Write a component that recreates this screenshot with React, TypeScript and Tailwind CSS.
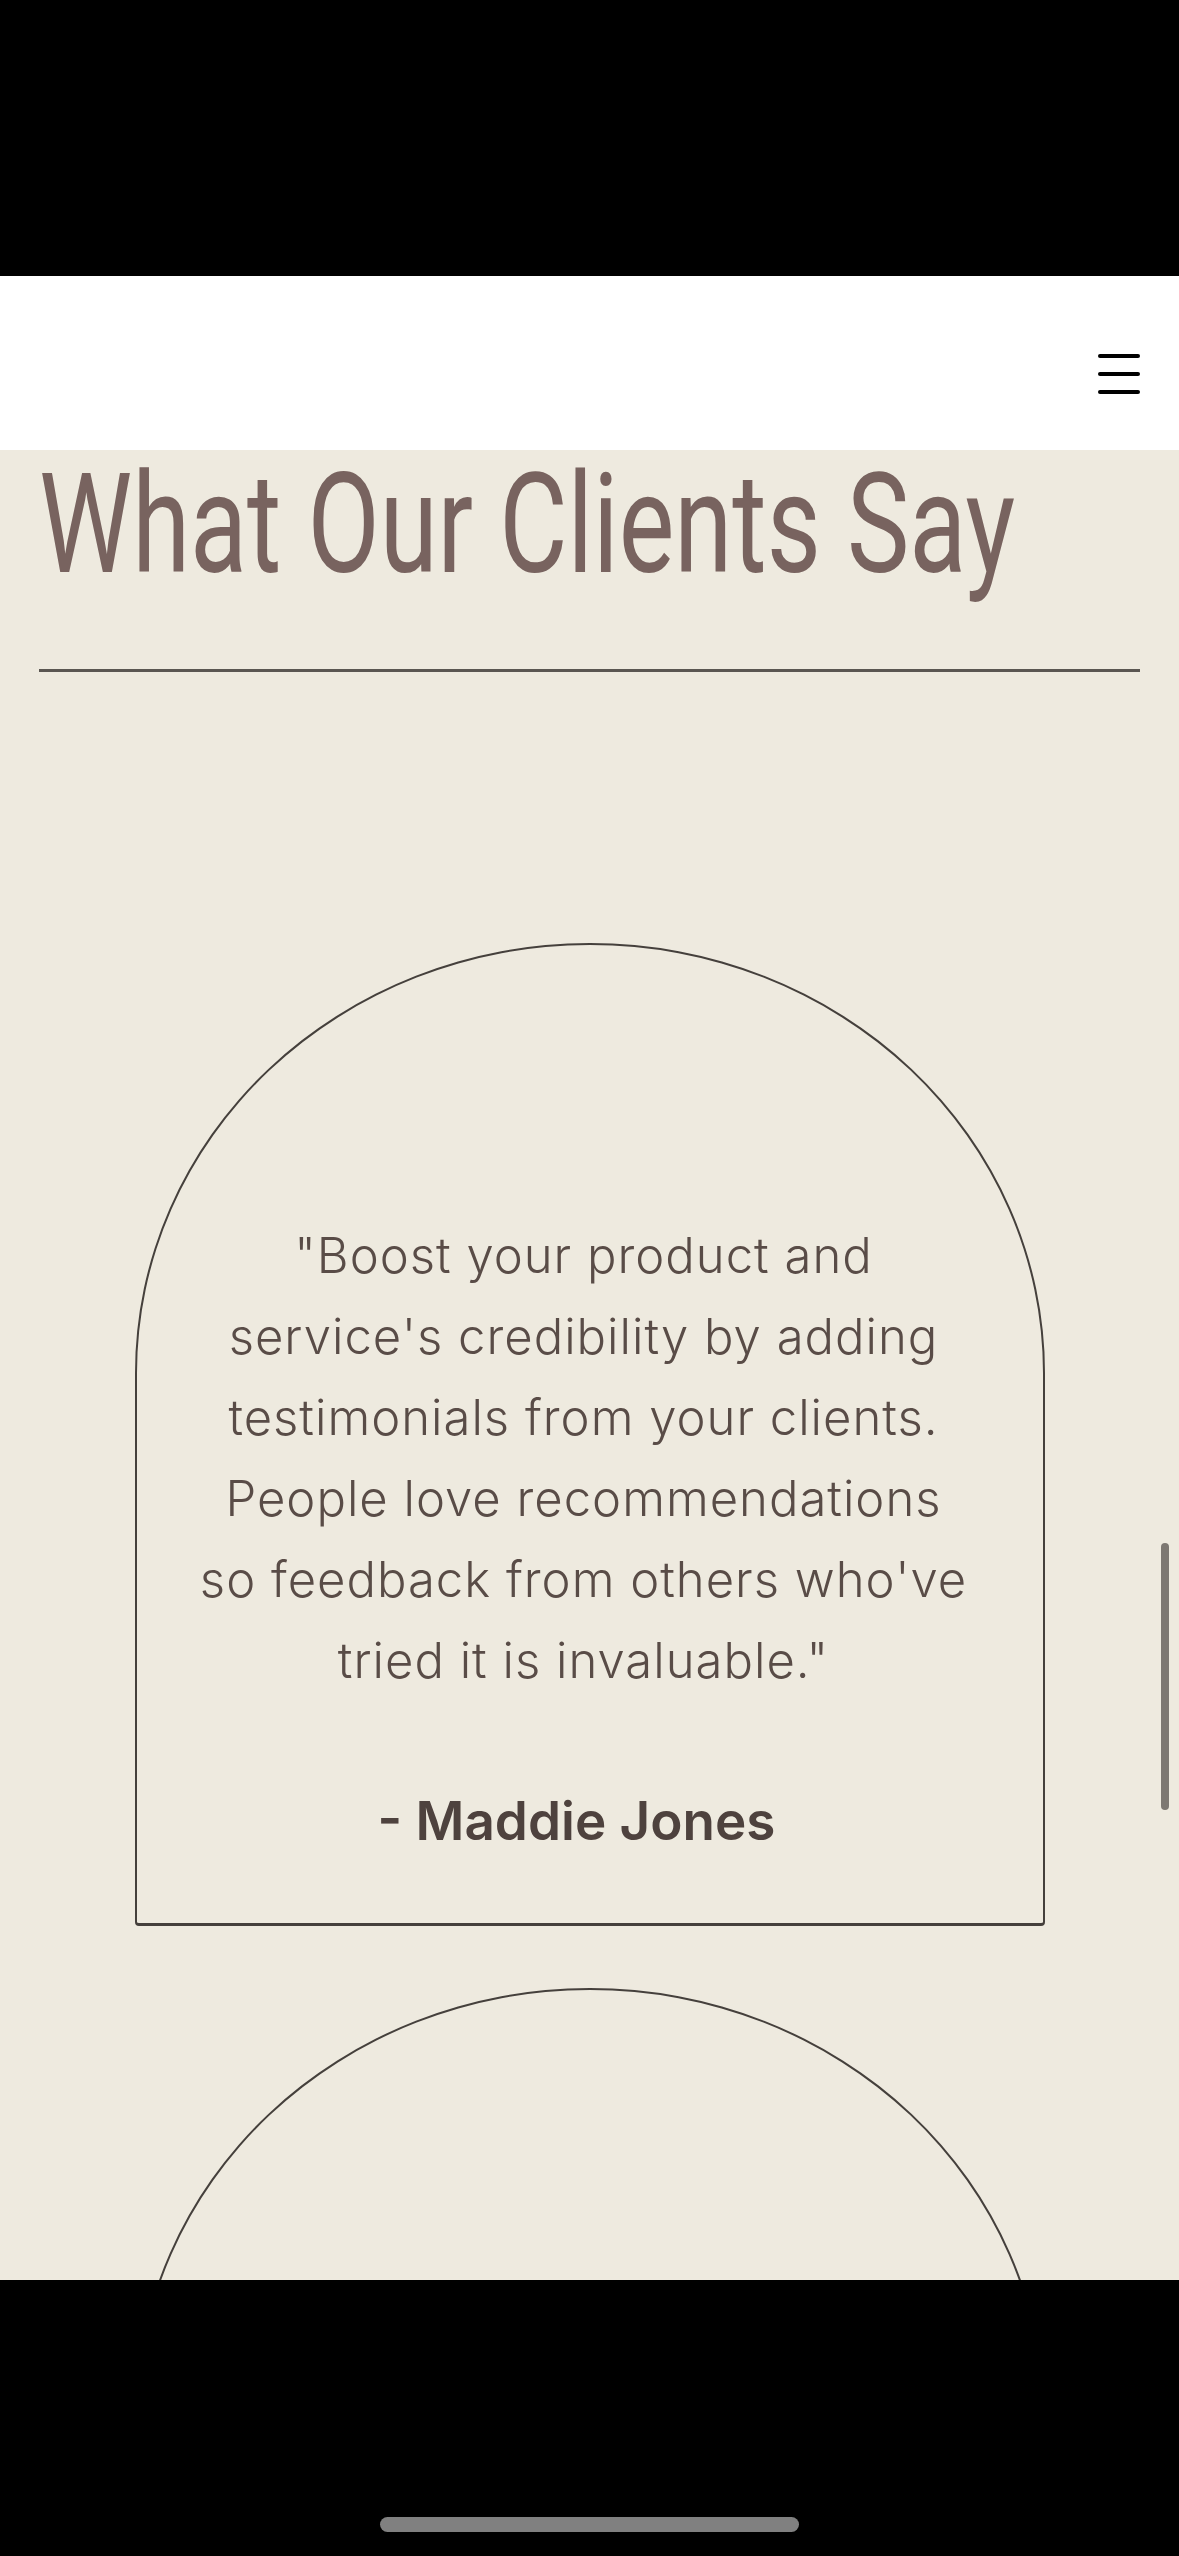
import { useState } from 'react'

const testimonials = [
  {
    id: 'maddie',
    lines: [
      '"Boost your product and',
      "service's credibility by adding",
      'testimonials from your clients.',
      'People love recommendations',
      "so feedback from others who've",
      'tried it is invaluable."',
    ],
    author: '- Maddie Jones',
  },
  {
    id: 'next',
    lines: [],
    author: '',
  },
]

function ArchCard(props: { lines: string[]; author: string }) {
  const { lines, author } = props
  return (
    <article className="mx-auto w-[910px] min-h-[983px] shrink-0 border-2 border-b-[3px] border-[#45403c] rounded-tl-[455px_430px] rounded-tr-[455px_430px] rounded-b-[4px] pt-[270px] pb-[72px] pr-[12px] flex flex-col items-center text-center">
      {lines.length > 0 && (
        <p className="font-['Inter',sans-serif] font-light text-[49px] leading-[81px] tracking-[1px] text-[#594c47] whitespace-nowrap">
          {lines.map((l, i) => (
            <span key={i} className="block">
              {l}
            </span>
          ))}
        </p>
      )}
      {author && (
        <h6 className="mt-[92px] mr-[14px] font-['Inter',sans-serif] font-semibold text-[53px] leading-[56px] text-[#4e423e]">
          {author}
        </h6>
      )}
    </article>
  )
}

export default function App() {
  const [open, setOpen] = useState(false)
  return (
    <div className="w-[1179px] h-[2556px] flex flex-col bg-black overflow-hidden">
      <div className="h-[276px] shrink-0 bg-black" />

      <header className="h-[174px] shrink-0 bg-white flex items-center justify-end pr-[39px] pt-[22px]">
        <button
          aria-label="Menu"
          onClick={() => setOpen(!open)}
          className="w-[42px] flex flex-col gap-[14px]"
        >
          <span className="block h-[4px] w-full rounded-full bg-black" />
          <span className="block h-[4px] w-full rounded-full bg-black" />
          <span className="block h-[4px] w-full rounded-full bg-black" />
        </button>
      </header>

      <main className="relative flex-1 min-h-0 overflow-hidden bg-[#eeeadf]">
        <div className="px-[39px] pt-[25px]">
          <h1 className="w-max origin-[0_97px] scale-y-[1.333] whitespace-nowrap font-['Roboto',sans-serif] font-normal text-[105px] leading-[123px] text-[#78635f]">
            What Our Clients Say
          </h1>
          <div className="mt-[71px] h-[3px] bg-[#5a5651]" />
        </div>

        <div className="flex flex-col gap-[62px] pt-[271px]">
          {testimonials.map((t) => (
            <ArchCard key={t.id} lines={t.lines} author={t.author} />
          ))}
        </div>

        <div className="absolute right-[10px] top-[1093px] h-[267px] w-[8px] rounded-full bg-[#7d7872]" />
      </main>

      <div className="h-[276px] shrink-0 bg-black flex justify-center pt-[237px]">
        <div className="h-[15px] w-[419px] rounded-full bg-[#808080]" />
      </div>
    </div>
  )
}
